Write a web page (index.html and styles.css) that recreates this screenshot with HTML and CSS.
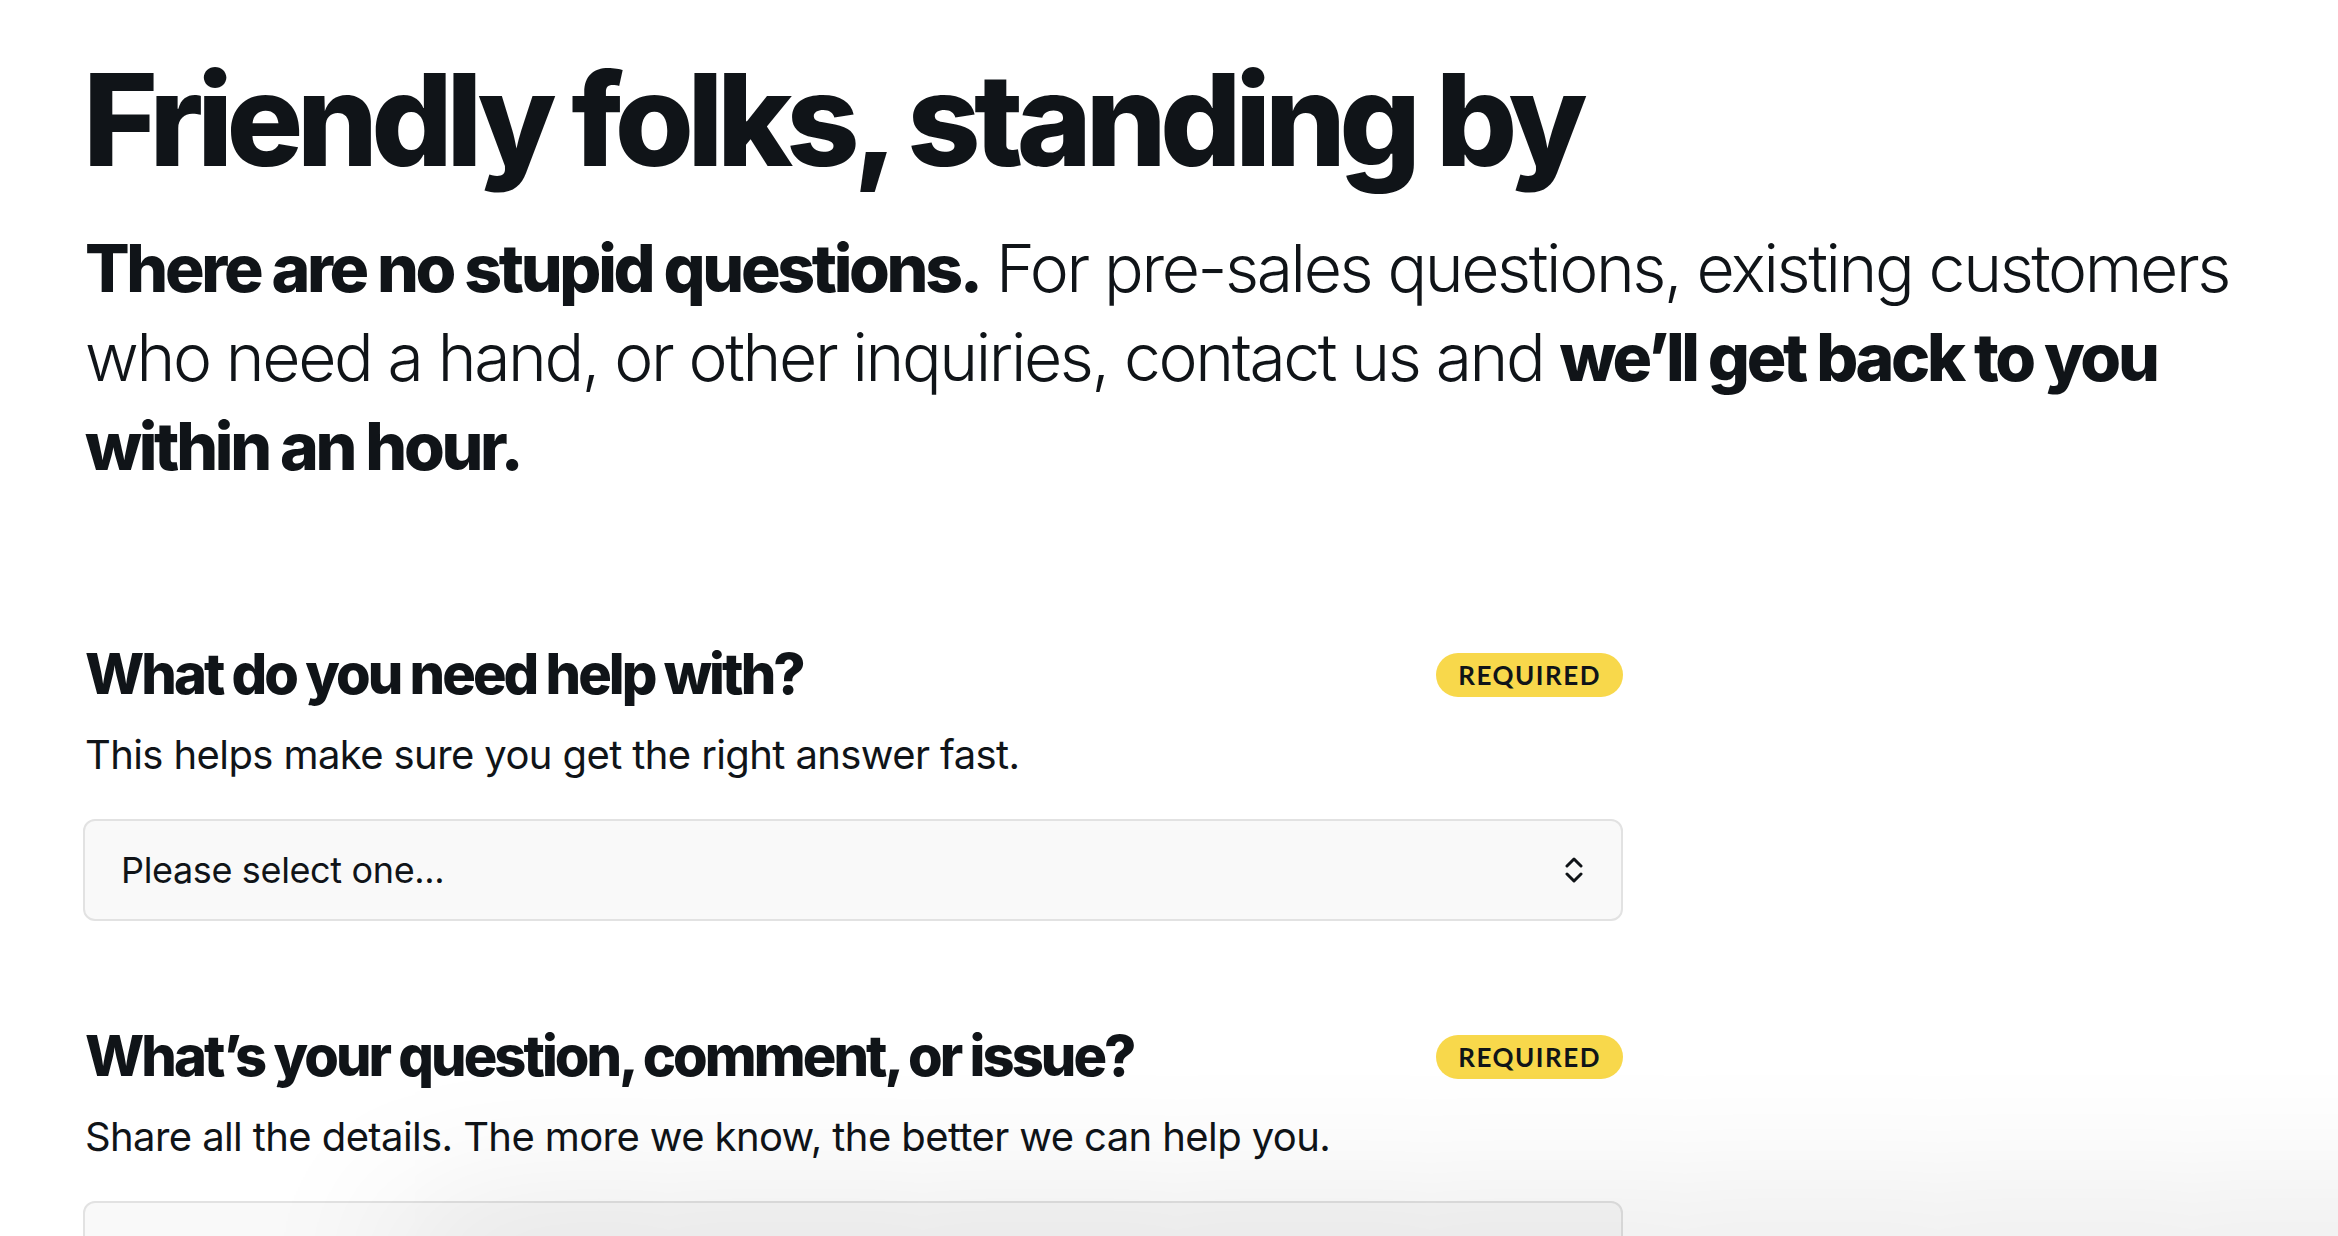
FILE: index.html
```html
<!DOCTYPE html>
<html lang="en">
<head>
    <meta charset="UTF-8">
    <meta name="viewport" content="width=device-width, initial-scale=1.0">
    <title>Contact us</title>
    <link rel="stylesheet" href="styles.css">
</head>
<body>

    <div class="page">
        <h1 class="title">Friendly folks, standing by</h1>
        <p class="intro">
            <strong>There are no stupid questions.</strong> For pre-sales questions, existing customers
            who need a hand, or other inquiries, contact us and <strong>we’ll get back to you
            within an hour.</strong>
        </p>

        <form class="contact-form">
            <div class="field">
                <div class="field-head">
                    <h2>What do you need help with?</h2>
                    <span class="badge">REQUIRED</span>
                </div>
                <p class="hint">This helps make sure you get the right answer fast.</p>
                <div class="select">
                    <span>Please select one...</span>
                    <svg class="chevrons" width="18" height="30" viewBox="0 0 18 30">
                        <polyline points="2,11 9,4 16,11" />
                        <polyline points="2,19 9,26 16,19" />
                    </svg>
                </div>
            </div>

            <div class="field">
                <div class="field-head">
                    <h2>What’s your question, comment, or issue?</h2>
                    <span class="badge">REQUIRED</span>
                </div>
                <p class="hint">Share all the details. The more we know, the better we can help you.</p>
                <div class="textarea"></div>
            </div>
        </form>
    </div>

    <!-- shadow from the bar sitting just below the fold -->
    <div class="fold-shadow"></div>

</body>
</html>
```

FILE: styles.css
```css
body {
    margin: 0;
    padding: 0;
    background-color: #fff;
    color: #101418;
    font-family: 'Inter', 'Liberation Sans', sans-serif;
    overflow: hidden;
}
.page {
    padding: 45px 0 0 83px;
}
.title {
    margin: 0;
    font-size: 128px;
    line-height: 150px;
    font-weight: 800;
    letter-spacing: -0.052em;
}
.intro {
    margin: 29px 0 0 2px;
    max-width: 2180px;
    font-size: 66px;
    line-height: 89px;
    font-weight: 300;
    letter-spacing: -0.036em;
}
.intro strong {
    font-weight: 800;
    letter-spacing: -0.05em;
}
.contact-form {
    width: 1540px;
    margin-top: 150px;
}
.field {
    margin-bottom: 102px;
}
.field-head {
    display: flex;
    justify-content: space-between;
    align-items: center;
}
.field-head h2 {
    margin: 0 0 0 2px;
    font-size: 56px;
    line-height: 67px;
    font-weight: 800;
    letter-spacing: -0.053em;
}
.badge {
    background-color: #f8d84b;
    color: #101418;
    font-family: 'Lato', sans-serif;
    font-weight: 700;
    font-size: 26px;
    letter-spacing: 1.5px;
    height: 44px;
    line-height: 44px;
    padding: 0 22px;
    border-radius: 22px;
}
.hint {
    margin: 17px 0 34px 2px;
    font-size: 40px;
    line-height: 60px;
    font-weight: 400;
    letter-spacing: -0.015em;
}
.select {
    display: flex;
    justify-content: space-between;
    align-items: center;
    height: 98px;
    padding: 0 38px 0 36px;
    background-color: #f9f9f9;
    border: 2px solid #e2e2e2;
    border-radius: 12px;
    font-size: 36px;
    letter-spacing: -0.01em;
}
.chevrons polyline {
    fill: none;
    stroke: #101418;
    stroke-width: 3;
    stroke-linecap: round;
    stroke-linejoin: round;
}
.textarea {
    height: 300px;
    background-color: #f9f9f9;
    border: 2px solid #e2e2e2;
    border-radius: 12px;
}
.fold-shadow {
    position: fixed;
    left: 420px;
    right: -200px;
    bottom: -60px;
    height: 60px;
    box-shadow: 0 0 160px 20px rgba(0,0,0,0.12);
}
```
